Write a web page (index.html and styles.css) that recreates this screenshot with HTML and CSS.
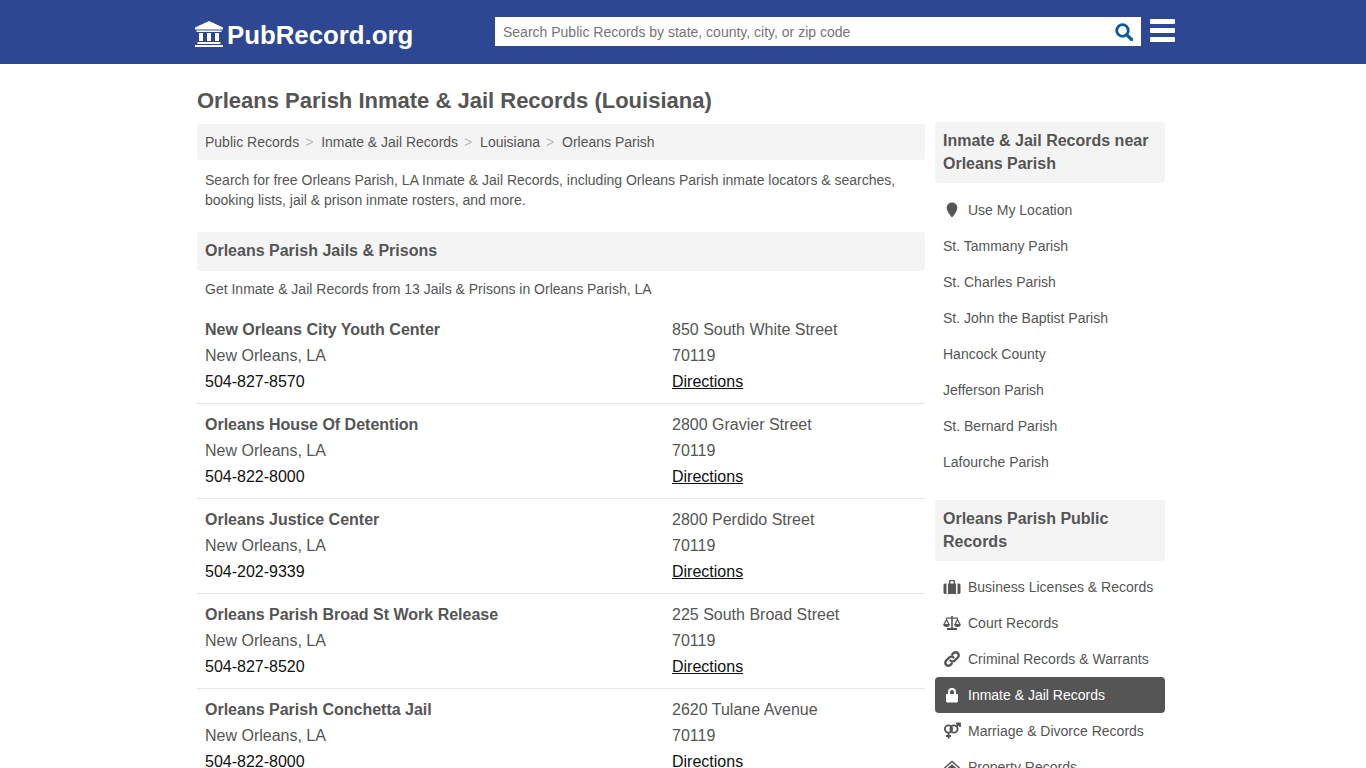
FILE: index.html
```html
<!DOCTYPE html>
<html lang="en">
<head>
  <meta charset="UTF-8">
  <meta name="viewport" content="width=device-width, initial-scale=1.0">
  <title>Orleans Parish Inmate &amp; Jail Records (Louisiana)</title>
  <link rel="stylesheet" href="styles.css">
</head>
<body>
  <header class="top">
    <div class="top-inner">
      <a class="logo" href="#">
        <svg class="logo-icon" viewBox="0 0 28 26"><path d="M14 0 28 6.500V8.500H0V6.500zM1.500 9.500h25v1.500h-25zM4 12h4v8H4zM12 12h4v8h-4zM20 12h4v8h-4zM2.500 21h23v2h-23zM0 24h28v2H0z" fill="#fff"/></svg>
        <span>PubRecord.org</span>
      </a>
      <form class="search">
        <input type="text" placeholder="Search Public Records by state, county, city, or zip code">
        <svg class="search-icon" viewBox="0 0 18 18"><circle cx="7.500" cy="7.500" r="5.800" fill="none" stroke="#0b5a9e" stroke-width="2.800"/><path d="M11.800 11.800 16.500 16.500" stroke="#0b5a9e" stroke-width="3.200" stroke-linecap="round"/></svg>
      </form>
      <div class="burger"><i></i><i></i><i></i></div>
    </div>
  </header>

  <div class="page">
    <h1>Orleans Parish Inmate &amp; Jail Records (Louisiana)</h1>
    <div class="columns">
      <main class="main">
        <ul class="crumbs">
          <li><a href="#">Public Records</a></li>
          <li><a href="#">Inmate &amp; Jail Records</a></li>
          <li><a href="#">Louisiana</a></li>
          <li><a href="#">Orleans Parish</a></li>
        </ul>
        <p class="intro">Search for free Orleans Parish, LA Inmate &amp; Jail Records, including Orleans Parish inmate locators &amp; searches, booking lists, jail &amp; prison inmate rosters, and more.</p>
        <h2 class="band">Orleans Parish Jails &amp; Prisons</h2>
        <p class="lead">Get Inmate &amp; Jail Records from 13 Jails &amp; Prisons in Orleans Parish, LA</p>

        <div class="row">
          <div><b>New Orleans City Youth Center</b><br>New Orleans, LA<br><span class="phone">504-827-8570</span></div>
          <div>850 South White Street<br>70119<br><a class="dir" href="#">Directions</a></div>
        </div>
        <div class="row">
          <div><b>Orleans House Of Detention</b><br>New Orleans, LA<br><span class="phone">504-822-8000</span></div>
          <div>2800 Gravier Street<br>70119<br><a class="dir" href="#">Directions</a></div>
        </div>
        <div class="row">
          <div><b>Orleans Justice Center</b><br>New Orleans, LA<br><span class="phone">504-202-9339</span></div>
          <div>2800 Perdido Street<br>70119<br><a class="dir" href="#">Directions</a></div>
        </div>
        <div class="row">
          <div><b>Orleans Parish Broad St Work Release</b><br>New Orleans, LA<br><span class="phone">504-827-8520</span></div>
          <div>225 South Broad Street<br>70119<br><a class="dir" href="#">Directions</a></div>
        </div>
        <div class="row">
          <div><b>Orleans Parish Conchetta Jail</b><br>New Orleans, LA<br><span class="phone">504-822-8000</span></div>
          <div>2620 Tulane Avenue<br>70119<br><a class="dir" href="#">Directions</a></div>
        </div>
      </main>

      <aside class="side">
        <h3 class="side-head">Inmate &amp; Jail Records near Orleans Parish</h3>
        <ul class="side-list near">
          <li class="with-icon">
            <svg class="ico" viewBox="0 0 18 18"><path d="M9 1.500c3.200 0 5.300 2.300 5.300 5.200 0 3.300-3 7-5.300 9.800-2.300-2.800-5.300-6.500-5.300-9.800C3.700 3.800 5.800 1.500 9 1.500z" fill="#555"/></svg>
            <a href="#">Use My Location</a>
          </li>
          <li><a href="#">St. Tammany Parish</a></li>
          <li><a href="#">St. Charles Parish</a></li>
          <li><a href="#">St. John the Baptist Parish</a></li>
          <li><a href="#">Hancock County</a></li>
          <li><a href="#">Jefferson Parish</a></li>
          <li><a href="#">St. Bernard Parish</a></li>
          <li><a href="#">Lafourche Parish</a></li>
        </ul>
        <h3 class="side-head">Orleans Parish Public Records</h3>
        <ul class="side-list">
          <li class="with-icon">
            <svg class="ico" viewBox="0 0 18 18"><path d="M2 5.500h1.500V16H2a1.500 1.500 0 0 1-1.500-1.500V7A1.500 1.500 0 0 1 2 5.500zM14.500 5.500H16A1.500 1.500 0 0 1 17.500 7v7.500A1.500 1.500 0 0 1 16 16h-1.500zM5 5.500h1V3.200C6 2.500 6.500 2 7.200 2h3.600c.7 0 1.200.5 1.200 1.200v2.300h1V16H5zM7.300 5.500h3.400V3.300H7.300z" fill="#555"/></svg>
            <a href="#">Business Licenses &amp; Records</a>
          </li>
          <li class="with-icon">
            <svg class="ico" viewBox="0 0 18 18"><path d="M8.200 2h1.600v12H14v2H4v-2h4.200zM3 3.500h12v1.300H3z" fill="#555"/><path d="M3.500 5.500 1 10.500h5zM14.500 5.500 12 10.500h5z" fill="none" stroke="#555" stroke-width="1.200"/><path d="M.3 11h6.400c0 1.200-1.400 2-3.200 2S.3 12.200.3 11zM11.300 11h6.400c0 1.200-1.400 2-3.200 2s-3.200-.8-3.200-2z" fill="#555"/></svg>
            <a href="#">Court Records</a>
          </li>
          <li class="with-icon">
            <svg class="ico" viewBox="0 0 18 18"><path d="M7.500 10.500a3 3 0 0 0 4.300 0l3-3a3 3 0 0 0-4.300-4.300L9.300 4.400M10.500 7.500a3 3 0 0 0-4.300 0l-3 3a3 3 0 0 0 4.300 4.300l1.200-1.200" fill="none" stroke="#555" stroke-width="2.400" stroke-linecap="round"/></svg>
            <a href="#">Criminal Records &amp; Warrants</a>
          </li>
          <li class="with-icon on">
            <svg class="ico" viewBox="0 0 18 18"><path d="M5 8V6a4 4 0 0 1 8 0v2h.800c.7 0 1.200.5 1.200 1.200v6.100c0 .7-.5 1.200-1.200 1.200H4.200C3.500 16.500 3 16 3 15.300V9.200C3 8.500 3.500 8 4.200 8zM7 8h4V6a2 2 0 0 0-4 0z" fill="#fff"/></svg>
            <a href="#">Inmate &amp; Jail Records</a>
          </li>
          <li class="with-icon">
            <svg class="ico" viewBox="0 0 18 18"><circle cx="5.500" cy="7" r="3.600" fill="none" stroke="#555" stroke-width="1.900"/><circle cx="11" cy="7" r="3.600" fill="none" stroke="#555" stroke-width="1.900"/><path d="M5.500 10.500v6M3 14h5M13.500 4.500 16.500 1.800M13 1.500h4V5" fill="none" stroke="#555" stroke-width="1.800"/></svg>
            <a href="#">Marriage &amp; Divorce Records</a>
          </li>
          <li class="with-icon">
            <svg class="ico" viewBox="0 0 18 18"><path d="M9 2.500 17.500 10l-1 1L9 4.500 1.500 11l-1-1zM3.500 11 9 6.200l5.500 4.800v5h-4v-3.500h-3V16h-4z" fill="#555"/></svg>
            <a href="#">Property Records</a>
          </li>
        </ul>
      </aside>
    </div>
  </div>
</body>
</html>
```

FILE: styles.css
```css
html, body {
  height: 100%;
  overflow: hidden;
}

body {
  margin: 0;
  font-family: "Liberation Sans", Arial, sans-serif;
  color: #555;
  background: #fff;
}

a {
  color: inherit;
  text-decoration: none;
}

ul {
  list-style: none;
  margin: 0;
  padding: 0;
}

.top {
  height: 64px;
  background: #2e4792;
}

.top-inner {
  width: 980px;
  margin: 0 auto 0 195px;
  display: flex;
  align-items: flex-start;
}

.logo {
  display: flex;
  align-items: center;
  width: 300px;
  height: 64px;
  color: #fff;
  font-size: 25.8px;
  font-weight: bold;
}

.logo-icon {
  width: 28px;
  height: 26px;
  margin: 3px 4px 0 0;
}

.logo span {
  position: relative;
  top: 3px;
}

.search {
  display: flex;
  align-items: center;
  width: 646px;
  height: 29px;
  margin-top: 17px;
  background: #fff;
}

.search input {
  flex: 1;
  height: 100%;
  border: 0;
  outline: 0;
  padding: 0 8px;
  background: transparent;
  font: 14px "Liberation Sans", Arial, sans-serif;
}

.search input::placeholder {
  color: #757575;
}

.search-icon {
  width: 18px;
  height: 18px;
  margin-right: 8px;
}

.burger {
  margin: 19px 0 0 9px;
  width: 25px;
  display: flex;
  flex-direction: column;
  gap: 4px;
}

.burger i {
  display: block;
  height: 5px;
  background: #fff;
  border-radius: 1px;
}

.page {
  width: 968px;
  margin-left: 197px;
}

h1 {
  margin: 0;
  padding-top: 24px;
  height: 36px;
  line-height: 25px;
  font-size: 22px;
  font-weight: bold;
}

.columns {
  display: flex;
  gap: 10px;
  align-items: flex-start;
}

.main {
  width: 728px;
}

.crumbs {
  display: flex;
  height: 36px;
  align-items: center;
  padding: 0 8px;
  background: #f4f4f4;
  border-radius: 3px;
  font-size: 14px;
}

.crumbs li + li::before {
  content: ">";
  display: inline-block;
  width: 22px;
  padding-left: 6px;
  box-sizing: border-box;
  color: #bbb;
}

.intro {
  margin: 10px 0 22px;
  padding: 0 8px;
  font-size: 14px;
  line-height: 20px;
}

.band {
  margin: 0;
  height: 39px;
  line-height: 37px;
  padding: 0 8px;
  background: #f4f4f4;
  border-radius: 3px;
  font-size: 16px;
}

.lead {
  margin: 8px 0 18px;
  padding: 0 8px;
  font-size: 14px;
  line-height: 20px;
}

.row {
  display: grid;
  grid-template-columns: 467px 1fr;
  padding: 0 8px 8px;
  margin-bottom: 8px;
  border-bottom: 1px solid #e6e6e6;
  font-size: 16px;
  line-height: 26px;
}

.phone {
  color: #111;
}

.dir {
  color: #111;
  text-decoration: underline;
}

.side {
  width: 230px;
  margin-top: -2px;
}

.side-head {
  margin: 0;
  padding: 7px 8px 8px;
  background: #f4f4f4;
  border-radius: 3px;
  font-size: 16px;
  line-height: 23px;
}

.side-list {
  margin-top: 8px;
  font-size: 14px;
}

.near {
  margin-top: 9px;
  margin-bottom: 20px;
}

.side-list li {
  display: flex;
  align-items: center;
  height: 36px;
  padding: 0 8px;
  border-radius: 4px;
}

.ico {
  width: 18px;
  height: 18px;
  margin-right: 7px;
  flex: none;
}

.side-list .on {
  background: #555;
  color: #fff;
}
```
